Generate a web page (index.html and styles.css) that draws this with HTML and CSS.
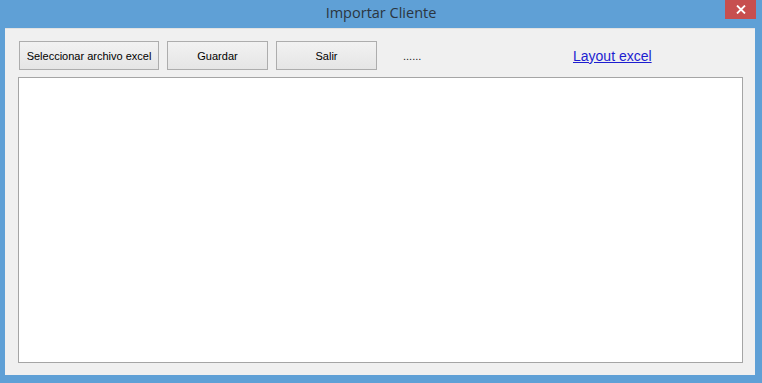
FILE: index.html
```html
<!DOCTYPE html>
<html lang="es">
  <head>
    <meta charset="UTF-8" />
    <meta name="viewport" content="width=device-width, initial-scale=1.0" />
    <title>Importar Cliente</title>
    <link rel="stylesheet" href="styles.css">
  </head>
  <body>
    <div class="window">
      <!-- Title bar -->
      <div class="titlebar">
        <span></span>
        <span class="title">Importar Cliente</span>
        <button class="close" type="button" title="Cerrar">
          <svg width="10" height="9" viewBox="0 0 10 9">
            <path d="M1 0.5 L9 8.5 M9 0.5 L1 8.5" stroke="#fff" stroke-width="1.8" />
          </svg>
        </button>
      </div>

      <!-- Client area -->
      <div class="client">
        <div class="toolbar">
          <button class="btn btn-wide" type="button">Seleccionar archivo excel</button>
          <button class="btn" type="button">Guardar</button>
          <button class="btn" type="button">Salir</button>
          <span class="status">......</span>
          <a class="link" href="#">Layout excel</a>
        </div>
        <div class="grid-panel"></div>
      </div>
    </div>
  </body>
</html>
```

FILE: styles.css
```css
* {
  margin: 0;
  padding: 0;
  box-sizing: border-box;
}

body {
  background: #5fa0d6;
  font-family: "Liberation Sans", Arial, sans-serif;
  width: 762px;
  height: 383px;
  overflow: hidden;
}

.window {
  display: flex;
  flex-direction: column;
  height: 100%;
}

/* Title bar */
.titlebar {
  display: grid;
  grid-template-columns: 1fr auto 1fr;
  height: 28px;
}
.title {
  font-family: "Open Sans", "Noto Sans", sans-serif;
  font-size: 14.5px;
  color: #2b3540;
  line-height: 26px;
}
.close {
  justify-self: end;
  width: 31px;
  height: 19px;
  margin-right: 6px;
  border: none;
  background: #c74f4f;
  display: flex;
  align-items: center;
  justify-content: center;
}

/* Client area */
.client {
  flex: 1;
  margin: 0 7px 8px 5px;
  padding: 13px 12px 12px 13px;
  background: #f0f0f0;
  border-top: 1px solid #e2e2e2;
  display: flex;
  flex-direction: column;
}

.toolbar {
  display: flex;
  align-items: center;
  gap: 8px;
  padding-left: 1px;
  margin-top: -1px;
  height: 29px;
}

.btn {
  width: 101px;
  height: 29px;
  border: 1px solid #adadad;
  background: linear-gradient(#f2f2f2, #e5e5e5);
  font-family: "Liberation Sans", Arial, sans-serif;
  font-size: 11px;
  color: #000;
}
.btn-wide {
  width: 140px;
}

.status {
  margin-left: 18px;
  font-size: 11px;
  color: #222;
  width: 162px;
}

.link {
  font-size: 14px;
  color: #1d1dd0;
  text-decoration: underline;
}

.grid-panel {
  flex: 1;
  margin-top: 7px;
  background: #fff;
  border: 1px solid #a5a5a5;
}
```
